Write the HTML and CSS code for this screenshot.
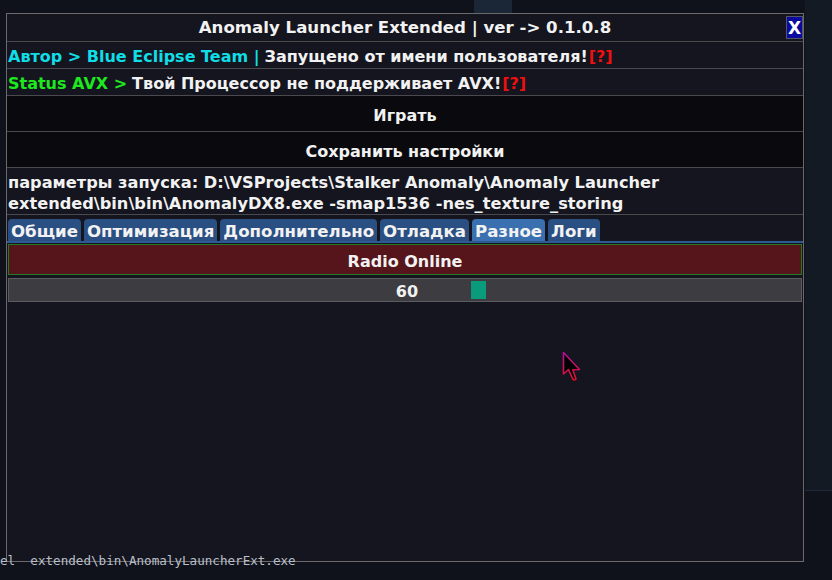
FILE: index.html
```html
<!DOCTYPE html>
<html lang="ru">
<head>
    <meta charset="UTF-8">
    <meta name="viewport" content="width=device-width, initial-scale=1.0">
    <title>Anomaly Launcher Extended</title>
    <link rel="stylesheet" href="styles.css">
</head>
<body>
    <div class="desktop">
        <div class="bg-panel-right"></div>
        <div class="bg-strip-top"></div>

        <div class="window">
            <div class="title-bar">
                <span class="title">Anomaly Launcher Extended | ver -&gt; 0.1.0.8</span>
                <button class="close-btn">X</button>
            </div>

            <div class="info-row">
                <span class="cyan">Автор &gt; Blue Eclipse Team |</span>
                <span>Запущено от имени пользователя!</span><span class="hint">[?]</span>
            </div>
            <div class="info-row">
                <span class="green">Status AVX &gt;</span>
                <span>Твой Процессор не поддерживает AVX!</span>
                <span class="hint">[?]</span>
            </div>

            <button class="wide-btn">Играть</button>
            <button class="wide-btn">Сохранить настройки</button>

            <div class="params">параметры запуска: D:\VSProjects\Stalker Anomaly\Anomaly Launcher extended\bin\bin\AnomalyDX8.exe -smap1536 -nes_texture_storing</div>

            <div class="tabs">
                <div class="tab">Общие</div>
                <div class="tab">Оптимизация</div>
                <div class="tab">Дополнительно</div>
                <div class="tab">Отладка</div>
                <div class="tab active">Разное</div>
                <div class="tab">Логи</div>
            </div>

            <div class="tab-body">
                <button class="radio-btn">Radio Online</button>
                <div class="slider">
                    <span class="slider-value">60</span>
                    <span class="slider-grab"></span>
                </div>
            </div>
        </div>

        <div class="bg-terminal">el&nbsp;&nbsp;extended\bin\AnomalyLauncherExt.exe</div>

        <svg class="cursor" width="22" height="32" viewBox="0 0 22 32">
            <defs>
                <linearGradient id="cur" x1="0" y1="0" x2="0" y2="1">
                    <stop offset="0" stop-color="#b0109a"/>
                    <stop offset="1" stop-color="#e0102a"/>
                </linearGradient>
            </defs>
            <path d="M1.5 1.5 L1.5 23 L6.5 18.5 L10.5 27.5 Q12 30 14 28 L10.8 18.8 L17.5 18.5 Z" fill="#000" stroke="url(#cur)" stroke-width="1.6" stroke-linejoin="round"/>
        </svg>
    </div>
</body>
</html>
```

FILE: styles.css
```css
body {
    margin: 0;
    background: #0f121a;
    font-family: 'DejaVu Sans', 'Open Sans', sans-serif;
    overflow: hidden;
}

.desktop {
    position: relative;
    width: 832px;
    height: 580px;
}

.bg-panel-right {
    position: absolute;
    left: 805px;
    top: 0;
    width: 27px;
    height: 490px;
    background: #131a24;
    border-bottom: 1px solid #1f2c3d;
}

.bg-strip-top {
    position: absolute;
    left: 474px;
    top: 0;
    width: 38px;
    height: 14px;
    background: #1b2636;
}

.bg-terminal {
    position: absolute;
    left: 0;
    top: 553px;
    font-family: 'DejaVu Sans Mono', monospace;
    font-size: 12.6px;
    color: #b9bec8;
    white-space: pre;
}

.window {
    position: absolute;
    left: 6px;
    top: 13px;
    width: 796px;
    height: 547px;
    border: 1px solid #6a6a6a;
    background: #14151e;
    color: #f2f2f2;
    font-weight: 700;
    font-size: 16px;
    display: flex;
    flex-direction: column;
}

.title-bar {
    height: 27px;
    flex-shrink: 0;
    display: flex;
    align-items: center;
    justify-content: center;
    position: relative;
    border-bottom: 1px solid #4a4a4e;
}

.title {
    font-size: 16.6px;
}

.close-btn {
    position: absolute;
    right: 0;
    top: 2px;
    width: 17px;
    height: 23px;
    padding: 0;
    background: #0a0a9e;
    border: 1px solid #55556a;
    color: #fff;
    font: 700 17px 'DejaVu Sans', sans-serif;
    line-height: 20px;
}

.info-row {
    height: 27px;
    flex-shrink: 0;
    box-sizing: border-box;
    display: flex;
    align-items: center;
    gap: 5px;
    padding: 3px 0 0 1px;
    border-bottom: 1px solid #4a4a4e;
    white-space: nowrap;
}

.cyan {
    color: #10dde6;
}

.green {
    color: #1ee81e;
}

.hint {
    color: #ee1010;
    margin-left: -4px;
}

.wide-btn {
    height: 36px;
    flex-shrink: 0;
    box-sizing: border-box;
    background: #0a0a0e;
    border: none;
    border-bottom: 1px solid #4a4a4e;
    color: #f2f2f2;
    font: inherit;
    font-weight: 700;
    padding: 3px 0 0;
}

.params {
    height: 47px;
    flex-shrink: 0;
    padding: 4px 0 0 1px;
    line-height: 21px;
    font-size: 16.2px;
    box-sizing: border-box;
    border-bottom: 1px solid #4a4a4e;
}

.tabs {
    display: flex;
    gap: 3px;
    padding: 4px 0 0 1px;
    border-bottom: 2px solid #2d5a94;
}

.tab {
    height: 22px;
    padding: 0 3px;
    background: #2a4f82;
    border-radius: 4px 4px 0 0;
    line-height: 26px;
    font-size: 16.6px;
    overflow: hidden;
}

.tab.active {
    background: #3a6fb0;
}

.tab-body {
    display: flex;
    flex-direction: column;
    gap: 3px;
    padding: 1px 1px 0 1px;
}

.radio-btn {
    height: 31px;
    box-sizing: border-box;
    background: #56141b;
    border: 1px solid #237a23;
    color: #f2f2f2;
    font: inherit;
    font-weight: 700;
    padding: 3px 0 0;
}

.slider {
    position: relative;
    height: 24px;
    background: #3c3c41;
    border: 1px solid #5c5c60;
    box-sizing: border-box;
    display: flex;
    align-items: center;
    justify-content: center;
    padding-top: 2px;
}

.slider-value {
    margin-left: 4px;
}

.slider-grab {
    position: absolute;
    left: 462px;
    top: 2px;
    width: 15px;
    height: 18px;
    background: #0a9a7c;
}

.cursor {
    position: absolute;
    left: 562px;
    top: 351px;
}
```
